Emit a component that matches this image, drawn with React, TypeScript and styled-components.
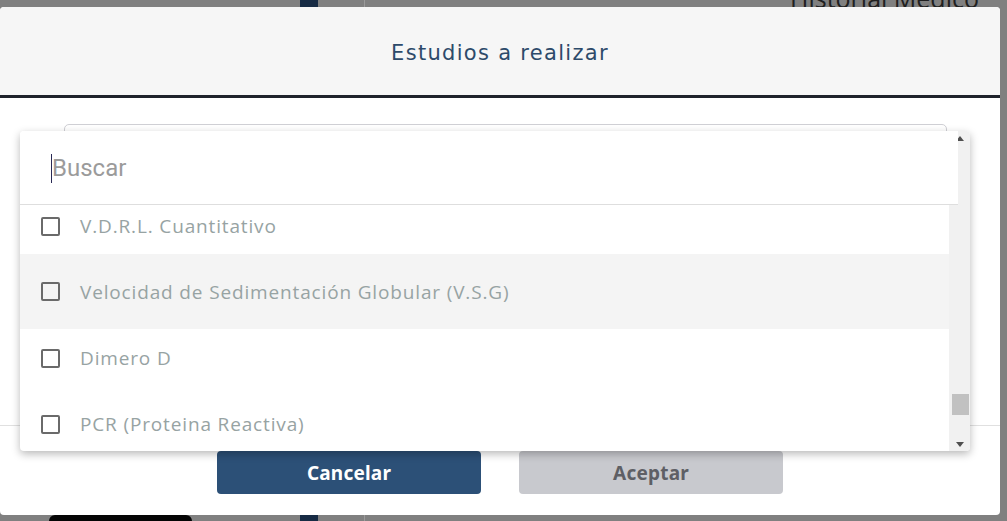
import React from 'react';
import styled, { createGlobalStyle } from 'styled-components';

const Global = createGlobalStyle`
  html, body { margin: 0; padding: 0; width: 1007px; height: 521px; overflow: hidden; background: #808080; }
  * { box-sizing: border-box; }
`;

const Page = styled.div`
  position: relative;
  width: 1007px;
  height: 521px;
  overflow: hidden;
  display: grid;
  grid-template-columns: 300px 18px 46px 1fr;
  background: #808080;
`;

const LeftCol = styled.div`
  display: flex;
  flex-direction: column;
  justify-content: flex-end;
  padding-left: 49px;
`;

const Avatar = styled.div`
  width: 143px;
  height: 6px;
  background: #050505;
  border-radius: 6px 6px 0 0;
`;

const NavyBar = styled.div`
  background: #172b44;
`;

const Gap = styled.div``;

const Content = styled.div`
  border-left: 1px solid #9a9a9a;
  display: flex;
  justify-content: flex-end;
  padding-right: 28px;
`;

const PageTitle = styled.h1`
  margin: -19px 0 0;
  font-family: 'Open Sans', sans-serif;
  font-weight: 400;
  font-size: 25px;
  line-height: 34px;
  color: #202020;
`;

const Modal = styled.div`
  position: absolute;
  left: 0;
  top: 7px;
  width: 1000px;
  height: 508px;
  background: #fff;
  border-radius: 4px;
  display: flex;
  flex-direction: column;
`;

const Header = styled.div`
  height: 91px;
  flex: none;
  background: #f6f6f6;
  border-bottom: 3px solid #1f232b;
  border-radius: 4px 4px 0 0;
  display: flex;
  justify-content: center;
  align-items: center;
  padding-top: 4px;
`;

const Title = styled.h2`
  margin: 0;
  font-family: 'DejaVu Sans', sans-serif;
  font-weight: 400;
  font-size: 21px;
  letter-spacing: 1.3px;
  color: #2d4a6a;
`;

const Body = styled.div`
  flex: 1;
  padding: 26px 53px 0 64px;
`;

const SelectBox = styled.div`
  height: 40px;
  border: 1px solid #cfcfd4;
  border-radius: 5px;
`;

const Footer = styled.div`
  height: 90px;
  flex: none;
  border-top: 1px solid #e0e0e0;
  display: flex;
  justify-content: center;
  align-items: flex-start;
  gap: 38px;
  padding-top: 25px;
`;

const Button = styled.button<{ $primary?: boolean }>`
  width: 264px;
  height: 43px;
  border: none;
  border-radius: 4px;
  background: ${p => (p.$primary ? '#2c5077' : '#c8c9ce')};
  color: ${p => (p.$primary ? '#ffffff' : '#5e5f65')};
  font-family: 'Noto Sans', sans-serif;
  font-weight: 700;
  font-size: 19px;
  letter-spacing: 0.2px;
`;

const Dropdown = styled.div`
  position: absolute;
  left: 20px;
  top: 124px;
  width: 950px;
  height: 320px;
  background: #fff;
  border-radius: 4px;
  box-shadow: 0 3px 8px rgba(0, 0, 0, 0.28);
  overflow: hidden;
  display: flex;
  flex-direction: column;
`;

const Scrollbar = styled.div`
  position: absolute;
  right: 0;
  top: 0;
  bottom: 0;
  width: 21px;
  background: #f1f1f1;
  display: flex;
  flex-direction: column;
  align-items: center;
`;

const Arrow = styled.div<{ $down?: boolean }>`
  flex: none;
  height: 17px;
  width: 21px;
  display: flex;
  align-items: center;
  justify-content: center;
  padding-left: 1px;
  &::after {
    content: '';
    width: 0;
    height: 0;
    border-left: 4.5px solid transparent;
    border-right: 4.5px solid transparent;
    ${p => (p.$down ? 'border-top: 5px solid #4f4f4f;' : 'border-bottom: 5px solid #4f4f4f;')}
    margin-top: ${p => (p.$down ? '3px' : '-2px')};
  }
`;

const Track = styled.div`
  flex: 1;
  width: 100%;
  display: flex;
  flex-direction: column;
  align-items: center;
`;

const Thumb = styled.div`
  width: 17px;
  height: 21px;
  background: #c1c1c1;
  margin-left: 2px;
`;

const Search = styled.div`
  position: relative;
  z-index: 1;
  width: 938px;
  height: 74px;
  flex: none;
  background: #fff;
  border-bottom: 1px solid #dedede;
  display: flex;
  align-items: center;
  padding-left: 31px;
`;

const Caret = styled.span`
  width: 1px;
  height: 29px;
  background: #2a2a55;
  margin-top: 2px;
`;

const Placeholder = styled.span`
  font-family: 'Roboto', sans-serif;
  font-size: 24px;
  color: #9b9b9b;
  margin-left: 0;
  margin-top: 1px;
`;

const List = styled.div`
  width: 929px;
  flex: 1;
  overflow: hidden;
`;

const ListInner = styled.div`
  margin-top: -12px;
`;

const Row = styled.div<{ $hover?: boolean }>`
  display: flex;
  align-items: center;
  gap: 20px;
  padding-left: 21px;
  height: ${p => (p.$hover ? '75px' : '66px')};
  margin: ${p => (p.$hover ? '-5px 0 -4px' : '0')};
  background: ${p => (p.$hover ? '#f4f4f4' : 'transparent')};
`;

const Check = styled.span`
  width: 19px;
  height: 19px;
  border: 2px solid #6a6a6a;
  border-radius: 2px;
  flex: none;
`;

const Label = styled.span`
  font-family: 'Open Sans', sans-serif;
  font-size: 19px;
  letter-spacing: 0.85px;
  color: #97a3a3;
`;

const items = [
  'V.D.R.L. Cuantitativo',
  'Velocidad de Sedimentación Globular (V.S.G)',
  'Dimero D',
  'PCR (Proteina Reactiva)',
];

export default function App() {
  return (
    <>
      <Global />
      <Page>
        <LeftCol>
          <Avatar />
        </LeftCol>
        <NavyBar />
        <Gap />
        <Content>
          <PageTitle>Historial Médico</PageTitle>
        </Content>
        <Modal>
          <Header>
            <Title>Estudios a realizar</Title>
          </Header>
          <Body>
            <SelectBox />
          </Body>
          <Footer>
            <Button $primary>Cancelar</Button>
            <Button>Aceptar</Button>
          </Footer>
          <Dropdown>
            <Scrollbar>
              <Arrow />
              <Track>
                <Thumb style={{ marginTop: 246 }} />
              </Track>
              <Arrow $down />
            </Scrollbar>
            <Search>
              <Caret />
              <Placeholder>Buscar</Placeholder>
            </Search>
            <List>
              <ListInner>
                {items.map((t, i) => (
                  <Row key={t} $hover={i === 1}>
                    <Check />
                    <Label>{t}</Label>
                  </Row>
                ))}
              </ListInner>
            </List>
          </Dropdown>
        </Modal>
      </Page>
    </>
  );
}
